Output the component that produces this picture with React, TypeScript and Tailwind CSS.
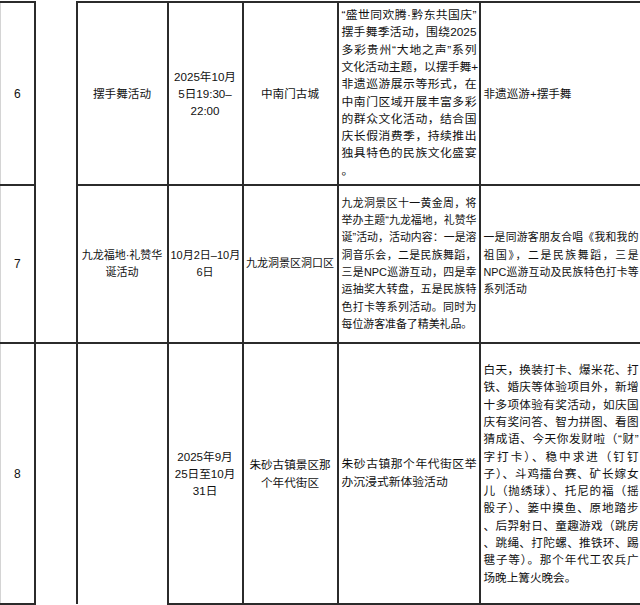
import React from "react";

type Row = {
  no: string;
  name: string[];
  time: string[];
  place: string[];
  midSize: string;
  desc: string[];
  descSize: string;
  form: string[];
  formSize: string;
  formJustify: boolean;
};

const rows: Row[] = [
  {
    no: "6",
    name: ["摆手舞活动"],
    time: ["2025年10月", "5日19:30–", "22:00"],
    place: ["中南门古城"],
    midSize: "text-[11.6px]",
    desc: [
      "“盛世同欢腾·黔东共国庆”",
      "摆手舞季活动，围绕2025",
      "多彩贵州“大地之声”系列",
      "文化活动主题，以摆手舞+",
      "非遗巡游展示等形式，在",
      "中南门区域开展丰富多彩",
      "的群众文化活动，结合国",
      "庆长假消费季，持续推出",
      "独具特色的民族文化盛宴",
      "。",
    ],
    descSize: "text-[11.8px]",
    form: ["非遗巡游+摆手舞"],
    formSize: "text-[11.6px]",
    formJustify: false,
  },
  {
    no: "7",
    name: ["九龙福地·礼赞华", "诞活动"],
    time: ["10月2日–10月", "6日"],
    place: ["九龙洞景区洞口区"],
    midSize: "text-[11px]",
    desc: [
      "九龙洞景区十一黄金周，将",
      "举办主题“九龙福地，礼赞华",
      "诞”活动，活动内容：一是溶",
      "洞音乐会，二是民族舞蹈，",
      "三是NPC巡游互动，四是幸",
      "运抽奖大转盘，五是民族特",
      "色打卡等系列活动。同时为",
      "每位游客准备了精美礼品。",
    ],
    descSize: "text-[10.9px]",
    form: [
      "一是同游客朋友合唱《我和我的",
      "祖国》，二是民族舞蹈，三是",
      "NPC巡游互动及民族特色打卡等",
      "系列活动",
    ],
    formSize: "text-[10.8px]",
    formJustify: true,
  },
  {
    no: "8",
    name: [],
    time: ["2025年9月", "25日至10月", "31日"],
    place: ["朱砂古镇景区那", "个年代街区"],
    midSize: "text-[11.6px]",
    desc: ["朱砂古镇那个年代街区举", "办沉浸式新体验活动"],
    descSize: "text-[11.8px]",
    form: [
      "白天，换装打卡、爆米花、打",
      "铁、婚庆等体验项目外，新增",
      "十多项体验有奖活动，如庆国",
      "庆有奖问答、智力拼图、看图",
      "猜成语、今天你发财啦（“财”",
      "字打卡）、稳中求进（钉钉",
      "子）、斗鸡擂台赛、矿长嫁女",
      "儿（抛绣球）、托尼的福（摇",
      "骰子）、篓中摸鱼、原地踏步",
      "、后羿射日、童趣游戏（跳房",
      "、跳绳、打陀螺、推铁环、踢",
      "毽子等）。那个年代工农兵广",
      "场晚上篝火晚会。",
    ],
    formSize: "text-[11.6px]",
    formJustify: true,
  },
];

const cell = "border-2 border-[#2b2b2b] align-middle p-0";

function Centered({ lines, size }: { lines: string[]; size: string }) {
  return (
    <div className={`text-center leading-[17.3px] whitespace-nowrap ${size}`}>
      {lines.map((l, i) => (
        <div key={i}>{l}</div>
      ))}
    </div>
  );
}

function Justified({ lines, size, justify }: { lines: string[]; size: string; justify: boolean }) {
  return (
    <div className={`leading-[17.3px] whitespace-nowrap ${size}`}>
      {lines.map((l, i) => (
        <div
          key={i}
          className={justify && i < lines.length - 1 ? "text-justify [text-align-last:justify]" : "text-left"}
        >
          {l}
        </div>
      ))}
    </div>
  );
}

export default function App() {
  return (
    <div className="w-[640px] h-[605px] overflow-hidden bg-white text-[#111] font-['Liberation_Sans','Noto_Sans_CJK_SC',sans-serif]">
      <table className="table-fixed border-collapse w-[640px] mt-[1px]">
        <colgroup>
          <col className="w-[34px]" />
          <col className="w-[42px]" />
          <col className="w-[91px]" />
          <col className="w-[75px]" />
          <col className="w-[95px]" />
          <col className="w-[142px]" />
          <col className="w-[161px]" />
        </colgroup>
        <tbody>
          {rows.map((r, idx) => (
            <tr key={r.no} className={idx === 0 ? "h-[183px]" : idx === 1 ? "h-[158px]" : "h-[261px]"}>
              <td className={`${cell} border-l border-l-[#d4d4d4] text-center text-[12px]`}>{r.no}</td>
              {idx === 0 && <td rowSpan={2} className={`${cell} border-t-0`} />}
              {idx === 2 && <td className={`${cell} border-b-0`} />}
              <td className={`${cell} ${idx === 2 ? "border-b-0" : ""} px-[2px]`}>
                <Centered lines={r.name} size={r.midSize} />
              </td>
              <td className={`${cell} px-[2px]`}>
                <Centered lines={r.time} size={r.midSize} />
              </td>
              <td className={`${cell} px-[2px]`}>
                <Centered lines={r.place} size={r.midSize} />
              </td>
              <td className={`${cell} pl-[3px] pr-[2px]`}>
                <Justified lines={r.desc} size={r.descSize} justify />
              </td>
              <td className={`${cell} pl-[3px] pr-[1px]`}>
                <Justified lines={r.form} size={r.formSize} justify={r.formJustify} />
              </td>
            </tr>
          ))}
        </tbody>
      </table>
    </div>
  );
}
